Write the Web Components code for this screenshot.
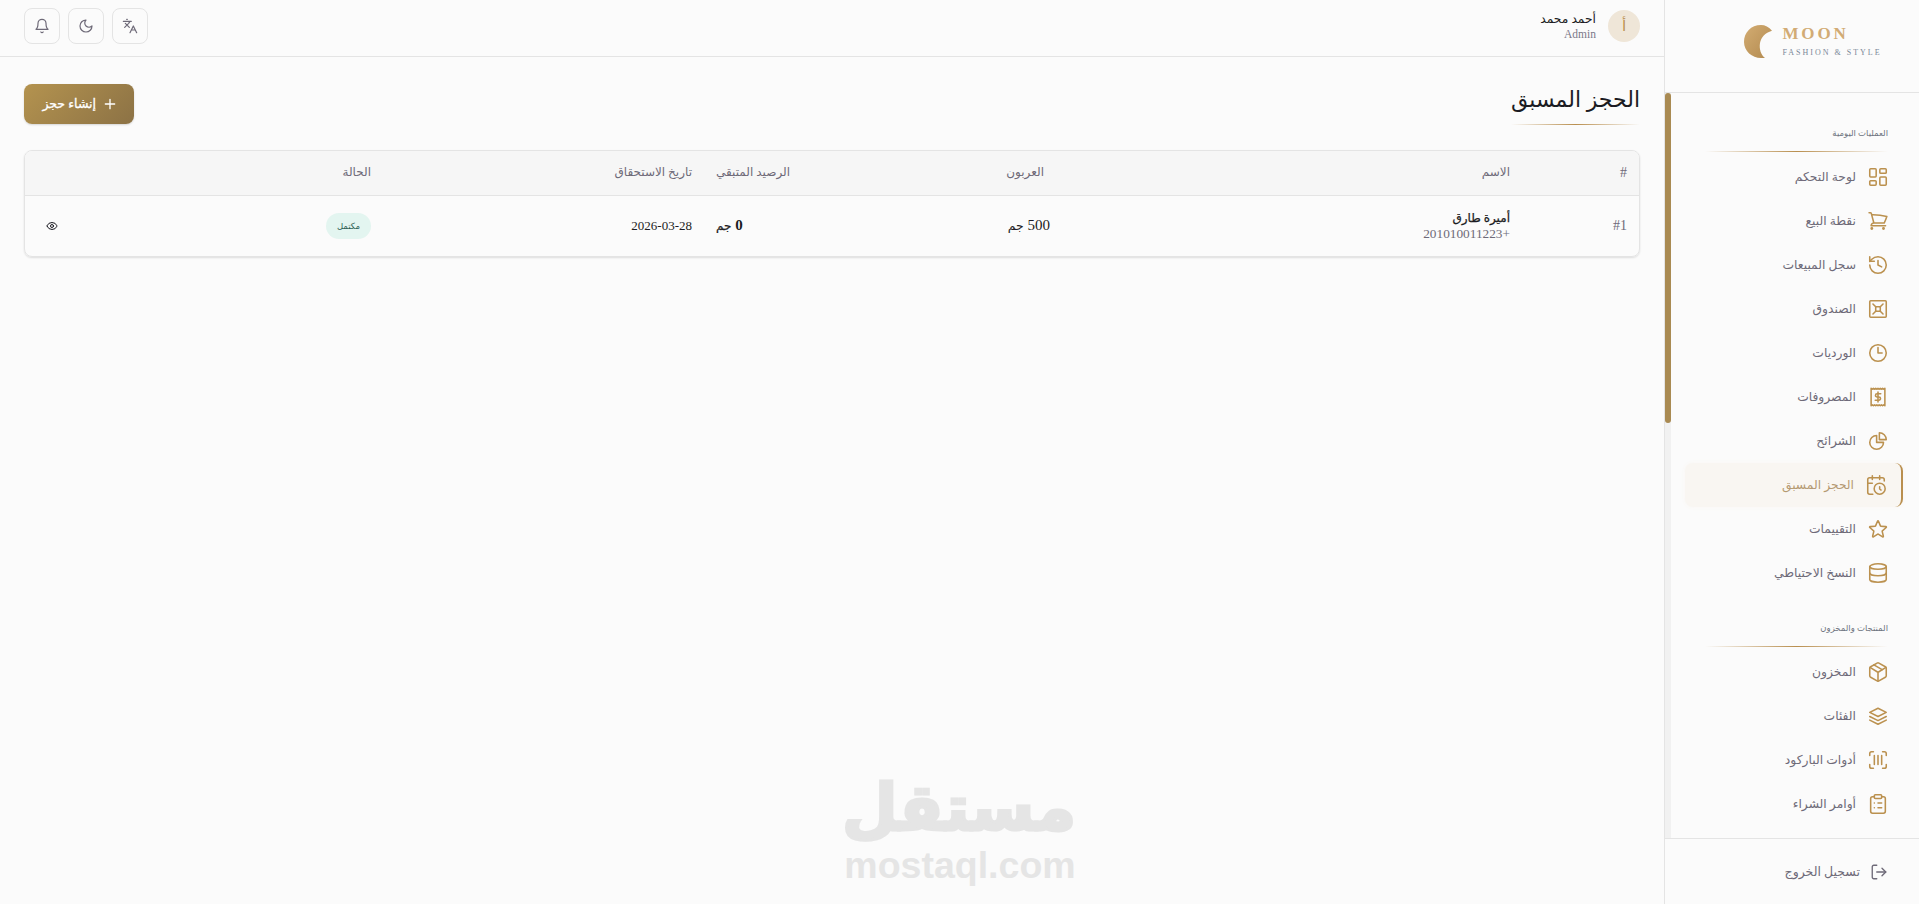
<!DOCTYPE html>
<html lang="ar" dir="rtl">
<head>
<meta charset="utf-8">
<title>الحجز المسبق</title>
<style>
    html, body { margin: 0; height: 100%; }
    body { background: #fbfbfb; color: #1b1b22; font-family: "Liberation Serif", "DejaVu Sans", serif; overflow: hidden; }
</style>
</head>
<body>
<app-shell>
    <side-bar slot="side"></side-bar>
    <top-bar></top-bar>
    <booking-page></booking-page>
    <water-mark></water-mark>
</app-shell>

<script>
const ICONS = {
    dashboard: '<rect x="3" y="3" width="7" height="9" rx="1"/><rect x="14" y="3" width="7" height="5" rx="1"/><rect x="14" y="12" width="7" height="9" rx="1"/><rect x="3" y="16" width="7" height="5" rx="1"/>',
    cart: '<path d="M2.25 3h1.386c.51 0 .955.343 1.087.835l.383 1.437M7.5 14.25a3 3 0 0 0-3 3h15.75m-12.75-3h11.218c1.121-2.3 2.1-4.684 2.924-7.138a60.114 60.114 0 0 0-16.536-1.84M7.5 14.25 5.106 5.272M6 20.25a.75.75 0 1 1-1.5 0 .75.75 0 0 1 1.5 0Zm12.75 0a.75.75 0 1 1-1.5 0 .75.75 0 0 1 1.5 0Z"/>',
    history: '<path d="M3 12a9 9 0 1 0 9-9 9.75 9.75 0 0 0-6.74 2.74L3 8"/><path d="M3 3v5h5"/><path d="M12 7v5l4 2"/>',
    box: '<rect x="3" y="3" width="18" height="18" rx="1"/><rect x="9.500" y="9.500" width="5" height="5"/><path d="M6.500 6.500l3 3M17.500 6.500l-3 3M17.500 17.500l-3-3M6.500 17.500l3-3"/>',
    clock: '<path d="M12 6v6h4.5m4.5 0a9 9 0 1 1-18 0 9 9 0 0 1 18 0Z"/>',
    receipt: '<path d="M4.500 2.500v19l1.250-1 1.250 1 1.250-1 1.250 1 1.250-1 1.250 1 1.250-1 1.250 1 1.250-1 1.250 1 1.250-1 1.250 1v-19l-1.250 1-1.250-1-1.250 1-1.250-1-1.250 1-1.250-1-1.250 1-1.250-1-1.250 1-1.250-1-1.250 1z"/><path d="M15 8.500h-4a1.750 1.750 0 0 0 0 3.500h2a1.750 1.750 0 0 1 0 3.500H9M12 6.500v11"/>',
    pie: '<path d="M10.500 6a7.500 7.500 0 1 0 7.500 7.500h-7.500V6Z"/><path d="M13.500 10.500H21A7.500 7.500 0 0 0 13.500 3v7.500Z"/>',
    calendar: '<path d="M21 7.500V6a2 2 0 0 0-2-2H5a2 2 0 0 0-2 2v14a2 2 0 0 0 2 2h3.500"/><path d="M16 2v4M8 2v4M3 10h5M17.500 17.500 16 16.300V14"/><circle cx="16" cy="16" r="6"/>',
    star: '<path d="M11.480 3.499a.562.562 0 0 1 1.040 0l2.125 5.111a.563.563 0 0 0 .475.345l5.518.442c.499.040.701.663.321.988l-4.204 3.602a.563.563 0 0 0-.182.557l1.285 5.385a.562.562 0 0 1-.840.610l-4.725-2.885a.562.562 0 0 0-.586 0L6.982 20.540a.562.562 0 0 1-.840-.610l1.285-5.386a.562.562 0 0 0-.182-.557l-4.204-3.602a.562.562 0 0 1 .321-.988l5.518-.442a.563.563 0 0 0 .475-.345L11.480 3.500Z"/>',
    database: '<ellipse cx="12" cy="5" rx="9" ry="3"/><path d="M3 5v14a9 3 0 0 0 18 0V5"/><path d="M3 12a9 3 0 0 0 18 0"/>',
    package: '<path d="M11 21.730a2 2 0 0 0 2 0l7-4A2 2 0 0 0 21 16V8a2 2 0 0 0-1-1.730l-7-4a2 2 0 0 0-2 0l-7 4A2 2 0 0 0 3 8v8a2 2 0 0 0 1 1.730z"/><path d="M12 22V12"/><path d="m3.300 7 7.703 4.734a2 2 0 0 0 1.994 0L20.700 7"/><path d="m7.500 4.270 9 5.150"/>',
    layers: '<path d="M12 3.500 3 8l9 4.500L21 8l-9-4.500"/><path d="m3 12.500 9 4.500 9-4.500"/><path d="m3 16.500 9 4.500 9-4.500"/>',
    barcode: '<path d="M3 7V5a2 2 0 0 1 2-2h2M17 3h2a2 2 0 0 1 2 2v2M21 17v2a2 2 0 0 1-2 2h-2M7 21H5a2 2 0 0 1-2-2v-2M8 7v10M12 7v10M16 7v10"/>',
    clipboard: '<rect x="8" y="2" width="8" height="4" rx="1"/><path d="M16 4h2a2 2 0 0 1 2 2v14a2 2 0 0 1-2 2H6a2 2 0 0 1-2-2V6a2 2 0 0 1 2-2h2"/><path d="M12 11h4M12 16h4M8 11h.01M8 16h.01"/>',
    logout: '<path d="M9 21H5a2 2 0 0 1-2-2V5a2 2 0 0 1 2-2h4"/><path d="m16 17 5-5-5-5"/><path d="M21 12H9"/>',
    bell: '<path d="M6 8a6 6 0 0 1 12 0c0 7 3 9 3 9H3s3-2 3-9"/><path d="M10.300 21a1.940 1.940 0 0 0 3.400 0"/>',
    moon: '<path d="M12 3a6 6 0 0 0 9 9 9 9 0 1 1-9-9Z"/>',
    languages: '<path d="m5 8 6 6M4 14l6-6 2-3M2 5h12M7 2h1M22 22l-5-10-5 10M14 18h6"/>',
    eye: '<path d="M2.062 12.348a1 1 0 0 1 0-.696 10.750 10.750 0 0 1 19.876 0 1 1 0 0 1 0 .696 10.750 10.750 0 0 1-19.876 0"/><circle cx="12" cy="12" r="3"/>',
    plus: '<path d="M5 12h14M12 5v14"/>'
};

function icon(name, size, width) {
    return `<svg width="${size}" height="${size}" viewBox="0 0 24 24" fill="none" stroke="currentColor" stroke-width="${width || 2}" stroke-linecap="round" stroke-linejoin="round" aria-hidden="true">${ICONS[name]}</svg>`;
}

class AppShell extends HTMLElement {
    constructor() {
        super();
        this.attachShadow({mode: "open"}).innerHTML = `
        <style>
            :host { display: flex; height: 904px; position: relative; }
            .side { flex: 0 0 255px; }
            main { flex: 1; min-width: 0; display: flex; flex-direction: column; }
        </style>
        <div class="side"><slot name="side"></slot></div>
        <main><slot></slot></main>`;
    }
}

class SideBar extends HTMLElement {
    constructor() {
        super();
        this.attachShadow({mode: "open"}).innerHTML = `
        <style>
            * { box-sizing: border-box; }
            :host { display: flex; flex-direction: column; box-sizing: border-box; height: 904px; width: 255px; border-left: 1px solid #e4e4e4; }
            .logo { height: 93px; flex: none; border-bottom: 1px solid #e4e4e4; display: flex; justify-content: center; align-items: center; gap: 10px; padding: 0 0 10px 42px; direction: ltr; }
            .logo b { display: block; font: bold 17px "Liberation Serif", serif; letter-spacing: 2.9px; color: #d2ab74; line-height: 17px; }
            .logo small { display: block; font: 8px "Liberation Serif", serif; letter-spacing: 2px; color: #7a8798; margin-top: 6px; line-height: 9px; white-space: nowrap; }
            .middle { flex: 1; min-height: 0; display: flex; }
            nav { flex: 1; min-width: 0; overflow: hidden; padding: 7px 16px 0 14px; }
            .track { flex: 0 0 6px; background: #f1f1f1; }
            .thumb { height: 330px; background: #a98a52; border-radius: 4px; }
            footer { height: 66px; flex: none; border-top: 1px solid #e4e4e4; display: flex; align-items: center; gap: 10px; padding-right: 31px; color: #6e6a78; font-size: 12.500px; }
        </style>
        <div class="logo">
            <svg width="28" height="33" viewBox="0 0 28 33">
                <defs><linearGradient id="g" x1="0" y1="0" x2="1" y2="1"><stop offset="0" stop-color="#d3ac72"/><stop offset="1" stop-color="#b28a4f"/></linearGradient></defs>
                <path fill="url(#g)" d="M28 5.700C25 2 21 0 17 0 7 0 0 7.500 0 17c0 9 8 16 17 16h4c-4-3-6-9-5-15 1-6 5-10 12-12.300Z"/>
            </svg>
            <div><b>MOON</b><small>FASHION &amp; STYLE</small></div>
        </div>
        <div class="middle">
            <nav>
                <nav-section label="العمليات اليومية">
                    <nav-item icon="dashboard">لوحة التحكم</nav-item>
                    <nav-item icon="cart">نقطة البيع</nav-item>
                    <nav-item icon="history">سجل المبيعات</nav-item>
                    <nav-item icon="box">الصندوق</nav-item>
                    <nav-item icon="clock">الورديات</nav-item>
                    <nav-item icon="receipt">المصروفات</nav-item>
                    <nav-item icon="pie">الشرائح</nav-item>
                    <nav-item icon="calendar" active>الحجز المسبق</nav-item>
                    <nav-item icon="star">التقييمات</nav-item>
                    <nav-item icon="database">النسخ الاحتياطي</nav-item>
                </nav-section>
                <nav-section label="المنتجات والمخزون">
                    <nav-item icon="package">المخزون</nav-item>
                    <nav-item icon="layers">الفئات</nav-item>
                    <nav-item icon="barcode">أدوات الباركود</nav-item>
                    <nav-item icon="clipboard">أوامر الشراء</nav-item>
                </nav-section>
            </nav>
            <div class="track"><div class="thumb"></div></div>
        </div>
        <footer>${icon("logout", 18, 1.8)}<span>تسجيل الخروج</span></footer>`;
    }
}

class NavSection extends HTMLElement {
    constructor() {
        super();
        this.attachShadow({mode: "open"}).innerHTML = `
        <style>
            * { box-sizing: border-box; }
            :host { display: block; padding-top: 25px; }
            .label { font-size: 8.500px; line-height: 16px; color: #6e7480; padding-right: 15px; }
            .line { height: 1px; margin: 10px 15px 3px 0; background: linear-gradient(90deg, transparent, #b98f4f 50%, transparent); width: 183px; }
        </style>
        <div class="label"></div>
        <div class="line"></div>
        <slot></slot>`;
    }

    connectedCallback() {
        this.shadowRoot.querySelector(".label").textContent = this.getAttribute("label");
    }
}

class NavItem extends HTMLElement {
    constructor() {
        super();
        this.attachShadow({mode: "open"});
    }

    connectedCallback() {
        this.shadowRoot.innerHTML = `
        <style>
            * { box-sizing: border-box; }
            :host { display: flex; box-sizing: border-box; align-items: center; gap: 11px; height: 44px; padding-right: 14px; color: #6e6a78; font-size: 12.300px; border-radius: 8px; }
            :host([active]) { background: #f9f6f2; color: #b59a72; border-right: 2px solid #b98f4f; box-shadow: 0 0 5px #f9f6f2; }
            svg { color: #bb914f; flex: none; }
        </style>
        ${icon(this.getAttribute("icon"), 22, 1.7)}
        <span><slot></slot></span>`;
    }
}

class TopBar extends HTMLElement {
    constructor() {
        super();
        this.attachShadow({mode: "open"}).innerHTML = `
        <style>
            * { box-sizing: border-box; }
            :host { display: flex; box-sizing: border-box; flex: none; height: 57px; align-items: flex-start; justify-content: space-between; padding: 8px 24px 0; border-bottom: 1px solid #e4e4e4; }
            .user { display: flex; gap: 12px; align-items: center; padding-top: 2px; }
            .avatar { width: 32px; height: 32px; border-radius: 50%; background: #efe6d8; color: #bb914f; display: flex; align-items: center; justify-content: center; font-size: 15px; }
            .name { font-size: 12.300px; line-height: 16px; color: #1b1b22; }
            .role { font-size: 11.500px; line-height: 14px; color: #7a7888; }
            .tools { display: flex; gap: 8px; direction: ltr; }
        </style>
        <div class="user">
            <div class="avatar">أ</div>
            <div><div class="name">أحمد محمد</div><div class="role">Admin</div></div>
        </div>
        <div class="tools">
            <icon-button icon="bell"></icon-button>
            <icon-button icon="moon"></icon-button>
            <icon-button icon="languages"></icon-button>
        </div>`;
    }
}

class IconButton extends HTMLElement {
    constructor() {
        super();
        this.attachShadow({mode: "open"});
    }

    connectedCallback() {
        this.shadowRoot.innerHTML = `
        <style>
            :host { display: flex; align-items: center; justify-content: center; width: 36px; height: 36px; box-sizing: border-box; border: 1px solid #e4e4e4; border-radius: 8px; color: #6e6a78; }
        </style>
        ${icon(this.getAttribute("icon"), 16, 1.8)}`;
    }
}

class BookingPage extends HTMLElement {
    constructor() {
        super();
        this.attachShadow({mode: "open"}).innerHTML = `
        <style>
            * { box-sizing: border-box; }
            :host { display: block; padding: 27px 24px 0; }
            .head { display: flex; justify-content: space-between; align-items: flex-start; margin-bottom: 25px; }
            h1 { margin: 0; font-size: 22px; line-height: 32px; padding-bottom: 2px; font-weight: 400; color: #1b1b22; }
            .rule { height: 1px; margin-top: 6px; background: linear-gradient(90deg, transparent, #b98f4f 50%, transparent); }
            .create { display: flex; align-items: center; gap: 6px; width: 110px; height: 40px; padding: 0 16px 0 0; border-radius: 8px; color: #fff; font-size: 12.500px; -webkit-text-stroke: .3px #fff; background: linear-gradient(135deg, #b4934f, #8c7245); box-shadow: 0 1px 2px rgba(0,0,0,.15); white-space: nowrap; }
            .create svg { flex: none; }
            .card { border: 1px solid #e4e4e4; border-radius: 8px; box-shadow: 0 1px 2px rgba(0,0,0,.12); overflow: hidden; }
            table { width: 100%; border-collapse: collapse; table-layout: fixed; }
            th { background: #f6f6f6; height: 44px; font-size: 12px; font-weight: 400; color: #6e6a78; text-align: right; padding: 0 12px; border-bottom: 1px solid #e4e4e4; }
            th.hash { font-size: 14px; }
            td { height: 61px; font-size: 13px; padding: 0 12px; text-align: right; color: #1b1b22; }
            td.num { font-size: 14px; color: #6e6a78; }
            td.deposit { padding-right: 6px; font-size: 15px; }
            td.rest { text-align: left; font-size: 15px; font-weight: 700; }
            .cur { font-size: 12.500px; font-weight: 400; }
            .rest .cur { font-size: 12px; -webkit-text-stroke: .25px #1b1b22; }
            .client { font-size: 12px; line-height: 16px; -webkit-text-stroke: .25px #1b1b22; }
            .phone { font-size: 13.300px; line-height: 15px; color: #6e6a78; }
            .pill { display: inline-block; height: 26px; line-height: 26px; width: 45px; text-align: center; border-radius: 13px; background: #e3f5f0; color: #2c5f55; font-size: 8.500px; }
            .eye { text-align: left; padding-left: 21px; }
            .eye svg { display: block; margin-right: auto; }
        </style>
        <div class="head">
            <div>
                <h1>الحجز المسبق</h1>
                <div class="rule"></div>
            </div>
            <div class="create">${icon("plus", 16, 2)}<span>إنشاء حجز</span></div>
        </div>
        <div class="card">
            <table>
                <colgroup><col style="width:117px"><col style="width:466px"><col style="width:254px"><col style="width:98px"><col style="width:321px"><col></colgroup>
                <thead><tr><th class="hash">#</th><th>الاسم</th><th>العربون</th><th>الرصيد المتبقي</th><th>تاريخ الاستحقاق</th><th>الحالة</th><th></th></tr></thead>
                <tbody>
                    <tr>
                        <td class="num">#1</td>
                        <td><div class="client">أميرة طارق</div><div class="phone">+201010011223</div></td>
                        <td class="deposit">500 <span class="cur">جم</span></td>
                        <td class="rest">0 <span class="cur">جم</span></td>
                        <td>2026-03-28</td>
                        <td><span class="pill">مكتمل</span></td>
                        <td class="eye">${icon("eye", 12, 2)}</td>
                    </tr>
                </tbody>
            </table>
        </div>`;
    }
}

class WaterMark extends HTMLElement {
    constructor() {
        super();
        this.attachShadow({mode: "open"}).innerHTML = `
        <style>
            :host { position: absolute; left: 844px; top: 771px; width: 232px; text-align: center; color: #e5e5e5; pointer-events: none; }
            .ar { font: 700 64px/74px "DejaVu Sans", sans-serif; white-space: nowrap; -webkit-text-stroke: 3px #e5e5e5; }
            .en { font: 700 37.500px/40px "Liberation Sans", sans-serif; direction: ltr; white-space: nowrap; }
        </style>
        <div class="ar">مستقل</div>
        <div class="en">mostaql.com</div>`;
    }
}

customElements.define("app-shell", AppShell);
customElements.define("side-bar", SideBar);
customElements.define("nav-section", NavSection);
customElements.define("nav-item", NavItem);
customElements.define("top-bar", TopBar);
customElements.define("icon-button", IconButton);
customElements.define("booking-page", BookingPage);
customElements.define("water-mark", WaterMark);
</script>
</body>
</html>
